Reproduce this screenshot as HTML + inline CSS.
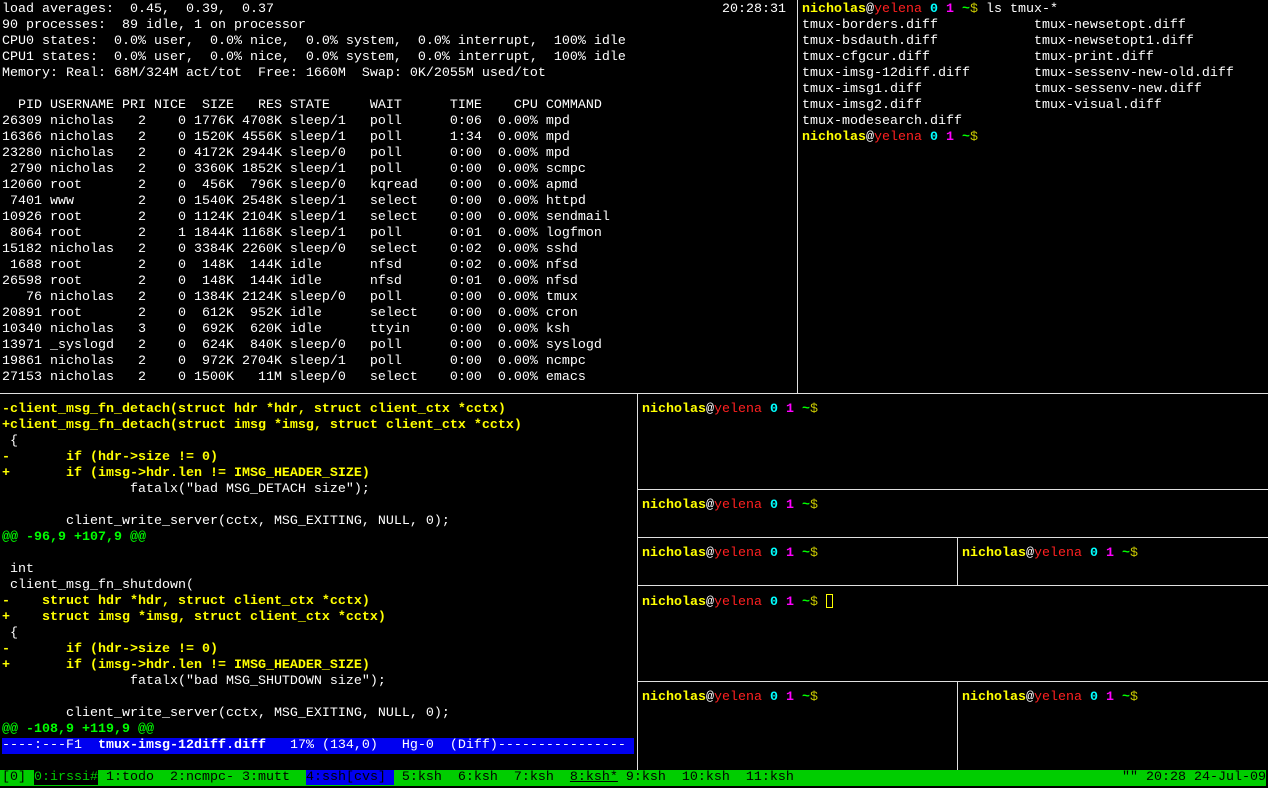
<!DOCTYPE html>
<html><head><meta charset="utf-8"><style>
html,body{margin:0;padding:0;background:#000;width:1268px;height:788px;overflow:hidden}
.p{position:absolute;white-space:pre;font-family:"Liberation Mono","DejaVu Sans Mono",monospace;font-size:13.33px;line-height:16px;color:#fff}
.y{color:#ffff00;font-weight:bold}
.g{color:#00ff00;font-weight:bold}
.u{color:#ffff00;font-weight:bold}
.r{color:#ff2020}
.c{color:#00ffff;font-weight:bold}
.m{color:#ff00ff;font-weight:bold}
.d{color:#c8c800}
.hl{position:absolute;height:1px;background:#e0e0e0}
.vl{position:absolute;width:1px;background:#e0e0e0}
.cur{display:inline-block;width:7px;height:14px;border:1px solid #ffff00;box-sizing:border-box;vertical-align:-3px}
</style></head><body>
<div class="p" style="left:2px;top:2px">load averages:  0.45,  0.39,  0.37
90 processes:  89 idle, 1 on processor
CPU0 states:  0.0% user,  0.0% nice,  0.0% system,  0.0% interrupt,  100% idle
CPU1 states:  0.0% user,  0.0% nice,  0.0% system,  0.0% interrupt,  100% idle
Memory: Real: 68M/324M act/tot  Free: 1660M  Swap: 0K/2055M used/tot

  PID USERNAME PRI NICE  SIZE   RES STATE     WAIT      TIME    CPU COMMAND
26309 nicholas   2    0 1776K 4708K sleep/1   poll      0:06  0.00% mpd
16366 nicholas   2    0 1520K 4556K sleep/1   poll      1:34  0.00% mpd
23280 nicholas   2    0 4172K 2944K sleep/0   poll      0:00  0.00% mpd
 2790 nicholas   2    0 3360K 1852K sleep/1   poll      0:00  0.00% scmpc
12060 root       2    0  456K  796K sleep/0   kqread    0:00  0.00% apmd
 7401 www        2    0 1540K 2548K sleep/1   select    0:00  0.00% httpd
10926 root       2    0 1124K 2104K sleep/1   select    0:00  0.00% sendmail
 8064 root       2    1 1844K 1168K sleep/1   poll      0:01  0.00% logfmon
15182 nicholas   2    0 3384K 2260K sleep/0   select    0:02  0.00% sshd
 1688 root       2    0  148K  144K idle      nfsd      0:02  0.00% nfsd
26598 root       2    0  148K  144K idle      nfsd      0:01  0.00% nfsd
   76 nicholas   2    0 1384K 2124K sleep/0   poll      0:00  0.00% tmux
20891 root       2    0  612K  952K idle      select    0:00  0.00% cron
10340 nicholas   3    0  692K  620K idle      ttyin     0:00  0.00% ksh
13971 _syslogd   2    0  624K  840K sleep/0   poll      0:00  0.00% syslogd
19861 nicholas   2    0  972K 2704K sleep/1   poll      0:00  0.00% ncmpc
27153 nicholas   2    0 1500K   11M sleep/0   select    0:00  0.00% emacs</div>
<div class="p" style="left:722px;top:2px">20:28:31</div>
<div class="p" style="left:802px;top:2px"><span class="u">nicholas</span>@<span class="r">yelena</span> <span class="c">0</span> <span class="m">1</span> <span class="g">~</span><span class="d">$</span> ls tmux-*
tmux-borders.diff            tmux-newsetopt.diff
tmux-bsdauth.diff            tmux-newsetopt1.diff
tmux-cfgcur.diff             tmux-print.diff
tmux-imsg-12diff.diff        tmux-sessenv-new-old.diff
tmux-imsg1.diff              tmux-sessenv-new.diff
tmux-imsg2.diff              tmux-visual.diff
tmux-modesearch.diff
<span class="u">nicholas</span>@<span class="r">yelena</span> <span class="c">0</span> <span class="m">1</span> <span class="g">~</span><span class="d">$</span></div>
<div class="p" style="left:2px;top:402px"><span class="y">-client_msg_fn_detach(struct hdr *hdr, struct client_ctx *cctx)
+client_msg_fn_detach(struct imsg *imsg, struct client_ctx *cctx)</span>
 {
<span class="y">-       if (hdr->size != 0)
+       if (imsg->hdr.len != IMSG_HEADER_SIZE)</span>
                fatalx("bad MSG_DETACH size");

        client_write_server(cctx, MSG_EXITING, NULL, 0);
<span class="g">@@ -96,9 +107,9 @@</span>

 int
 client_msg_fn_shutdown(
<span class="y">-    struct hdr *hdr, struct client_ctx *cctx)
+    struct imsg *imsg, struct client_ctx *cctx)</span>
 {
<span class="y">-       if (hdr->size != 0)
+       if (imsg->hdr.len != IMSG_HEADER_SIZE)</span>
                fatalx("bad MSG_SHUTDOWN size");

        client_write_server(cctx, MSG_EXITING, NULL, 0);
<span class="g">@@ -108,9 +119,9 @@</span></div>
<div class="p" style="left:2px;top:738px;width:632px;background:#0000f0">----:---F1  <b>tmux-imsg-12diff.diff</b>   17% (134,0)   Hg-0  (Diff)----------------</div>
<div class="p" style="left:642px;top:402px"><span class="u">nicholas</span>@<span class="r">yelena</span> <span class="c">0</span> <span class="m">1</span> <span class="g">~</span><span class="d">$</span></div>
<div class="p" style="left:642px;top:498px"><span class="u">nicholas</span>@<span class="r">yelena</span> <span class="c">0</span> <span class="m">1</span> <span class="g">~</span><span class="d">$</span></div>
<div class="p" style="left:642px;top:546px"><span class="u">nicholas</span>@<span class="r">yelena</span> <span class="c">0</span> <span class="m">1</span> <span class="g">~</span><span class="d">$</span></div>
<div class="p" style="left:962px;top:546px"><span class="u">nicholas</span>@<span class="r">yelena</span> <span class="c">0</span> <span class="m">1</span> <span class="g">~</span><span class="d">$</span></div>
<div class="p" style="left:642px;top:594px"><span class="u">nicholas</span>@<span class="r">yelena</span> <span class="c">0</span> <span class="m">1</span> <span class="g">~</span><span class="d">$</span> <span class="cur"></span></div>
<div class="p" style="left:642px;top:690px"><span class="u">nicholas</span>@<span class="r">yelena</span> <span class="c">0</span> <span class="m">1</span> <span class="g">~</span><span class="d">$</span></div>
<div class="p" style="left:962px;top:690px"><span class="u">nicholas</span>@<span class="r">yelena</span> <span class="c">0</span> <span class="m">1</span> <span class="g">~</span><span class="d">$</span></div>
<div class="vl" style="left:797px;top:0;height:394px"></div>
<div class="hl" style="left:0;top:393px;width:1268px"></div>
<div class="vl" style="left:637px;top:394px;height:376px"></div>
<div class="hl" style="left:638px;top:489px;width:630px"></div>
<div class="hl" style="left:638px;top:537px;width:630px"></div>
<div class="vl" style="left:957px;top:538px;height:48px"></div>
<div class="hl" style="left:638px;top:585px;width:630px"></div>
<div class="hl" style="left:638px;top:681px;width:630px"></div>
<div class="vl" style="left:957px;top:682px;height:88px"></div>
<div style="position:absolute;left:0;top:770px;width:1266px;height:16px;background:#00cd00"></div>
<div class="p" style="left:2px;top:770px;color:#000"><span>[0] </span><span style="background:#000;color:#00cd00">0:irssi#</span> 1:todo  2:ncmpc- 3:mutt  <span style="background:#0000f0">4:ssh[cvs] </span> 5:ksh  6:ksh  7:ksh  <u>8:ksh*</u> 9:ksh  10:ksh  11:ksh</div>
<div class="p" style="left:1122px;top:770px;color:#000">"" 20:28 24-Jul-09</div>
</body></html>
